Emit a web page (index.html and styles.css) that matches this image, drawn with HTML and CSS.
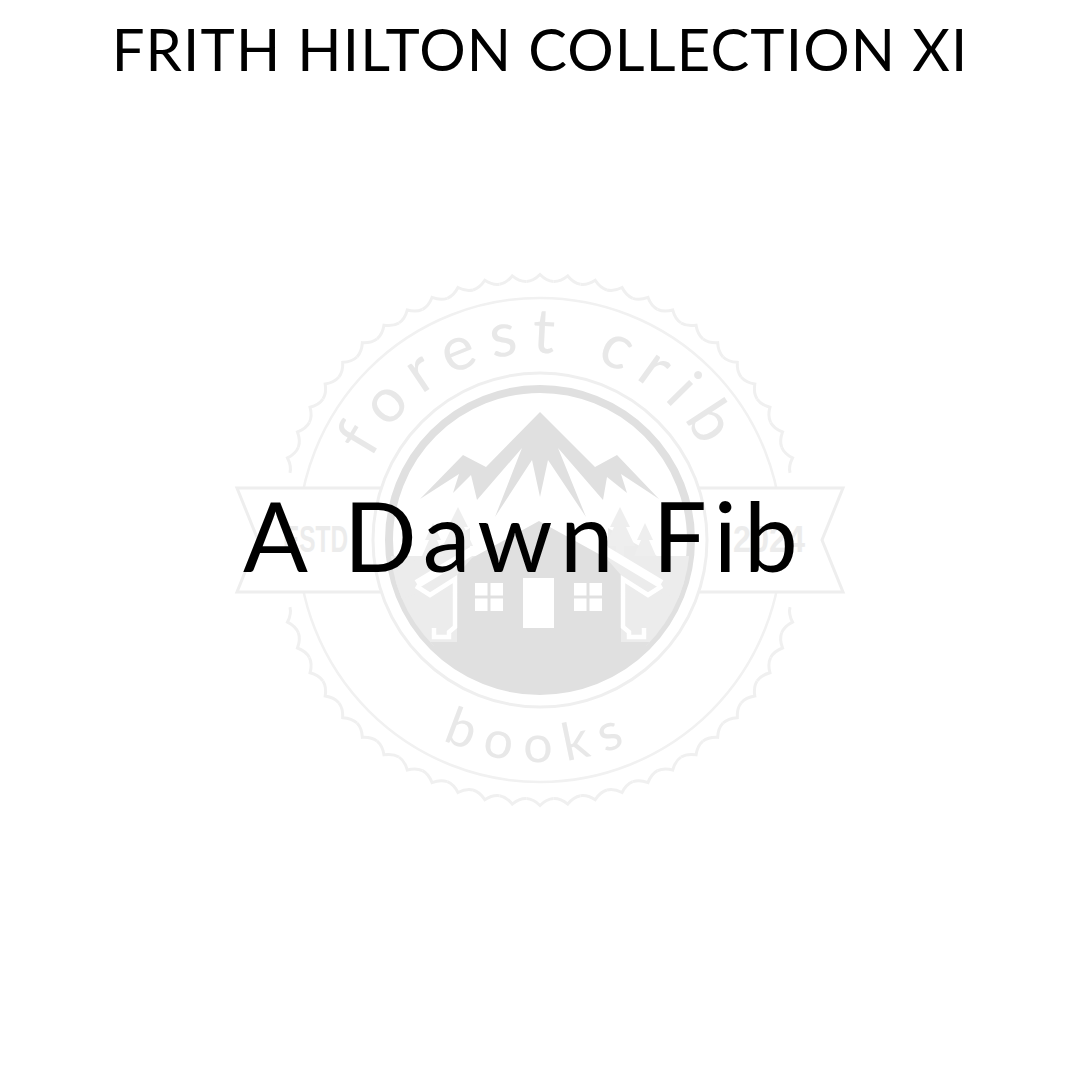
FILE: index.html
```html
<!DOCTYPE html>
<html lang="en">
<head>
<meta charset="utf-8">
<title>A Dawn Fib</title>
<link rel="stylesheet" href="styles.css">
</head>
<body>
<main class="cover">
  <svg class="crest" viewBox="0 0 1080 1080" aria-hidden="true">
    <defs>
      <path id="tooth" d="M526.5 281.5Q533.5 281 540 274.5Q546.5 281 553.5 281.5"/>
      <path id="arc-top" d="M353 540A187 187 0 0 1 727 540"/>
      <path id="arc-bottom" d="M318 540A222 222 0 0 0 762 540"/>
      <clipPath id="disc"><circle cx="540" cy="540" r="150"/></clipPath>
      <g id="house-side">
        <polyline class="strip-thick" points="417,584 472,551"/>
        <polyline class="strip-thin" points="416,586 430,595 455,579 455,627 449,632 449,637 434,637 434,628"/>
      </g>
      <g id="window">
        <rect class="pane" x="0" y="0" width="12.5" height="12.5"/>
        <rect class="pane" x="15.5" y="0" width="12.5" height="12.5"/>
        <rect class="pane" x="0" y="15.5" width="12.5" height="12.5"/>
        <rect class="pane" x="15.5" y="15.5" width="12.5" height="12.5"/>
      </g>
    </defs>

    <g class="scallop">
      <use href="#tooth" transform="rotate(-72 540 540)"/><use href="#tooth" transform="rotate(-66 540 540)"/><use href="#tooth" transform="rotate(-60 540 540)"/><use href="#tooth" transform="rotate(-54 540 540)"/><use href="#tooth" transform="rotate(-48 540 540)"/>
      <use href="#tooth" transform="rotate(-42 540 540)"/><use href="#tooth" transform="rotate(-36 540 540)"/><use href="#tooth" transform="rotate(-30 540 540)"/><use href="#tooth" transform="rotate(-24 540 540)"/><use href="#tooth" transform="rotate(-18 540 540)"/>
      <use href="#tooth" transform="rotate(-12 540 540)"/><use href="#tooth" transform="rotate(-6 540 540)"/><use href="#tooth"/><use href="#tooth" transform="rotate(6 540 540)"/><use href="#tooth" transform="rotate(12 540 540)"/>
      <use href="#tooth" transform="rotate(18 540 540)"/><use href="#tooth" transform="rotate(24 540 540)"/><use href="#tooth" transform="rotate(30 540 540)"/><use href="#tooth" transform="rotate(36 540 540)"/><use href="#tooth" transform="rotate(42 540 540)"/>
      <use href="#tooth" transform="rotate(48 540 540)"/><use href="#tooth" transform="rotate(54 540 540)"/><use href="#tooth" transform="rotate(60 540 540)"/><use href="#tooth" transform="rotate(66 540 540)"/><use href="#tooth" transform="rotate(72 540 540)"/>
      <use href="#tooth" transform="rotate(108 540 540)"/><use href="#tooth" transform="rotate(114 540 540)"/><use href="#tooth" transform="rotate(120 540 540)"/><use href="#tooth" transform="rotate(126 540 540)"/><use href="#tooth" transform="rotate(132 540 540)"/>
      <use href="#tooth" transform="rotate(138 540 540)"/><use href="#tooth" transform="rotate(144 540 540)"/><use href="#tooth" transform="rotate(150 540 540)"/><use href="#tooth" transform="rotate(156 540 540)"/><use href="#tooth" transform="rotate(162 540 540)"/>
      <use href="#tooth" transform="rotate(168 540 540)"/><use href="#tooth" transform="rotate(174 540 540)"/><use href="#tooth" transform="rotate(180 540 540)"/><use href="#tooth" transform="rotate(186 540 540)"/><use href="#tooth" transform="rotate(192 540 540)"/>
      <use href="#tooth" transform="rotate(198 540 540)"/><use href="#tooth" transform="rotate(204 540 540)"/><use href="#tooth" transform="rotate(210 540 540)"/><use href="#tooth" transform="rotate(216 540 540)"/><use href="#tooth" transform="rotate(222 540 540)"/>
      <use href="#tooth" transform="rotate(228 540 540)"/><use href="#tooth" transform="rotate(234 540 540)"/><use href="#tooth" transform="rotate(240 540 540)"/><use href="#tooth" transform="rotate(246 540 540)"/><use href="#tooth" transform="rotate(252 540 540)"/>
    </g>

    <circle class="hairline" cx="540" cy="540" r="242"/>
    <polygon class="ribbon" points="237,488 843,488 822,540 843,592 237,592 258,540"/>
    <text class="ribbon-label" x="283" y="552" textLength="65" lengthAdjust="spacingAndGlyphs">ESTD</text>
    <text class="ribbon-label" x="733" y="552" textLength="72" lengthAdjust="spacingAndGlyphs">2024</text>

    <text class="arc-label"><textPath href="#arc-top" startOffset="50%" class="arc-top-text">forest crib</textPath></text>
    <text class="arc-label"><textPath href="#arc-bottom" startOffset="50%" class="arc-bottom-text">books</textPath></text>

    <circle class="inner-ring" cx="540" cy="540" r="167"/>
    <circle class="badge-ring" cx="540" cy="540" r="151"/>

    <g clip-path="url(#disc)">
      <rect class="fill-light" x="380" y="556" width="320" height="90"/>
      <polygon class="fill-light" points="395,572 470,528 470,580 395,600"/>
      <polygon class="fill-light" points="685,572 608,528 608,580 685,600"/>
      <path class="tree" d="M458 507L468 527L464 527L473 546L462 546L462 556L454 556L454 546L443 546L452 527L448 527Z"/>
      <path class="tree" d="M433 523L441 540L437 540L444 556L422 556L429 540L425 540Z"/>
      <path class="tree" d="M620 507L630 527L626 527L635 546L624 546L624 556L616 556L616 546L605 546L614 527L610 527Z"/>
      <path class="tree" d="M645 523L653 540L649 540L656 556L634 556L641 540L637 540Z"/>
      <polygon class="fill-main" points="539,521 606,558 621,575 621,642 700,642 700,700 380,700 380,642 457,642 457,575 472,558"/>
      <use href="#house-side"/>
      <use href="#house-side" transform="translate(1078 0) scale(-1 1)"/>
    </g>
    <path class="fill-main" d="M540 412L595 467L617 455L659 499L621 474L627 493L607 477L603 500L558 448L586 517L548 460L540 497L532 460L495 517L522 448L477 500L471 475L453 493L459 474L420 499L463 455L486 467Z"/>
    <use href="#window" x="475" y="583"/>
    <use href="#window" x="574" y="583"/>
    <rect class="pane" x="523" y="578" width="31" height="50"/>
  </svg>

  <h1 class="collection">FRITH HILTON COLLECTION XI</h1>
  <p class="book-title">A Dawn Fib</p>
</main>
</body>
</html>
```

FILE: styles.css
```css
html, body {
  margin: 0;
  padding: 0;
  background: #fff;
}

.cover {
  display: grid;
  width: 1080px;
  height: 1080px;
  overflow: hidden;
  font-family: "Lato", "Open Sans", sans-serif;
  color: #000;
}

.cover > * {
  grid-area: 1 / 1;
}

.crest {
  display: block;
  width: 1080px;
  height: 1080px;
}

.collection {
  align-self: start;
  justify-self: center;
  margin: 14px 0 0;
  font-size: 58px;
  line-height: 70px;
  font-weight: 400;
  letter-spacing: 1.15px;
  white-space: nowrap;
}

.book-title {
  align-self: center;
  justify-self: center;
  margin: 0 32px 10px 0;
  font-size: 96px;
  line-height: 110px;
  font-weight: 400;
  letter-spacing: 7.2px;
  white-space: nowrap;
}

.scallop {
  fill: none;
  stroke: #f0f0f0;
  stroke-width: 3;
}

.hairline {
  fill: none;
  stroke: #f1f1f1;
  stroke-width: 2.5;
}

.ribbon {
  fill: #fff;
  stroke: #eeeeee;
  stroke-width: 3;
}

.ribbon-label {
  font-family: "Liberation Sans", sans-serif;
  font-size: 37px;
  font-weight: 700;
  fill: #ececec;
}

.arc-label {
  font-family: "Lato", sans-serif;
  font-weight: 400;
  fill: #e8e8e8;
}

.arc-top-text {
  font-size: 62px;
  letter-spacing: 13px;
  text-anchor: middle;
}

.arc-bottom-text {
  font-size: 52px;
  letter-spacing: 13px;
  text-anchor: middle;
}

.inner-ring {
  fill: #fff;
  stroke: #efefef;
  stroke-width: 3;
}

.badge-ring {
  fill: #fff;
  stroke: #e0e0e0;
  stroke-width: 8;
}

.fill-main {
  fill: #e0e0e0;
}

.fill-light {
  fill: #ececec;
}

.tree {
  fill: #eeeeee;
}

.pane {
  fill: #fff;
}

.strip-thick,
.strip-thin {
  fill: none;
  stroke: #fff;
  stroke-linejoin: miter;
}

.strip-thick {
  stroke-width: 9;
}

.strip-thin {
  stroke-width: 4.5;
}
```
